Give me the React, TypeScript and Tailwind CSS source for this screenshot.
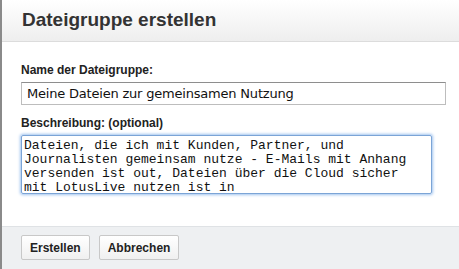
export default function App() {
  return (
    <div className="w-[459px] h-[269px] bg-white border-l-2 border-[#8a8a8a] flex flex-col font-['Liberation_Sans',Arial,sans-serif] text-[#222] overflow-hidden">
      <div className="h-[42px] shrink-0 bg-gradient-to-b from-white to-[#eeeeee] border-b border-[#dcdcdc] flex items-center pl-[20px]">
        <h1 className="text-[19px] font-bold text-[#333]">Dateigruppe erstellen</h1>
      </div>
      <div className="flex-1 pl-[19px] pt-[21px]">
        <label className="block text-[12px] font-bold leading-[14px]">Name der Dateigruppe:</label>
        <input
          className="mt-[5px] block w-[425px] h-[23px] border border-[#bdbdbd] border-t-[#8e8e8e] px-[5px] text-[13px] text-[#111] font-['DejaVu_Sans',sans-serif] tracking-[-0.2px] outline-none"
          defaultValue="Meine Dateien zur gemeinsamen Nutzung"
        />
        <label className="block mt-[11px] text-[12px] font-bold leading-[14px]">Beschreibung: (optional)</label>
        <textarea
          className="mt-[5px] block w-[411px] h-[59px] resize-none border border-[#7ba4d6] rounded-[2px] shadow-[0_0_3px_1px_#9fc3ef] px-[2px] pt-[3px] text-[13px] leading-[14px] text-[#111] font-['Liberation_Mono','Courier_New',monospace] outline-none overflow-hidden"
          defaultValue="Dateien, die ich mit Kunden, Partner, und Journalisten gemeinsam nutze - E-Mails mit Anhang versenden ist out, Dateien über die Cloud sicher mit LotusLive nutzen ist in"
        />
      </div>
      <div className="h-[43px] shrink-0 bg-[#eef0f2] border-t border-[#dfe2e5] flex items-center gap-[9px] pl-[19px] pb-[1px]">
        <button className="h-[25px] px-[8px] bg-gradient-to-b from-white to-[#f0f0f0] border border-[#c8c8c8] rounded-[2px] text-[12px] font-bold text-[#222]">Erstellen</button>
        <button className="h-[25px] px-[8px] bg-gradient-to-b from-white to-[#f0f0f0] border border-[#c8c8c8] rounded-[2px] text-[12px] font-bold text-[#222]">Abbrechen</button>
      </div>
    </div>
  );
}
